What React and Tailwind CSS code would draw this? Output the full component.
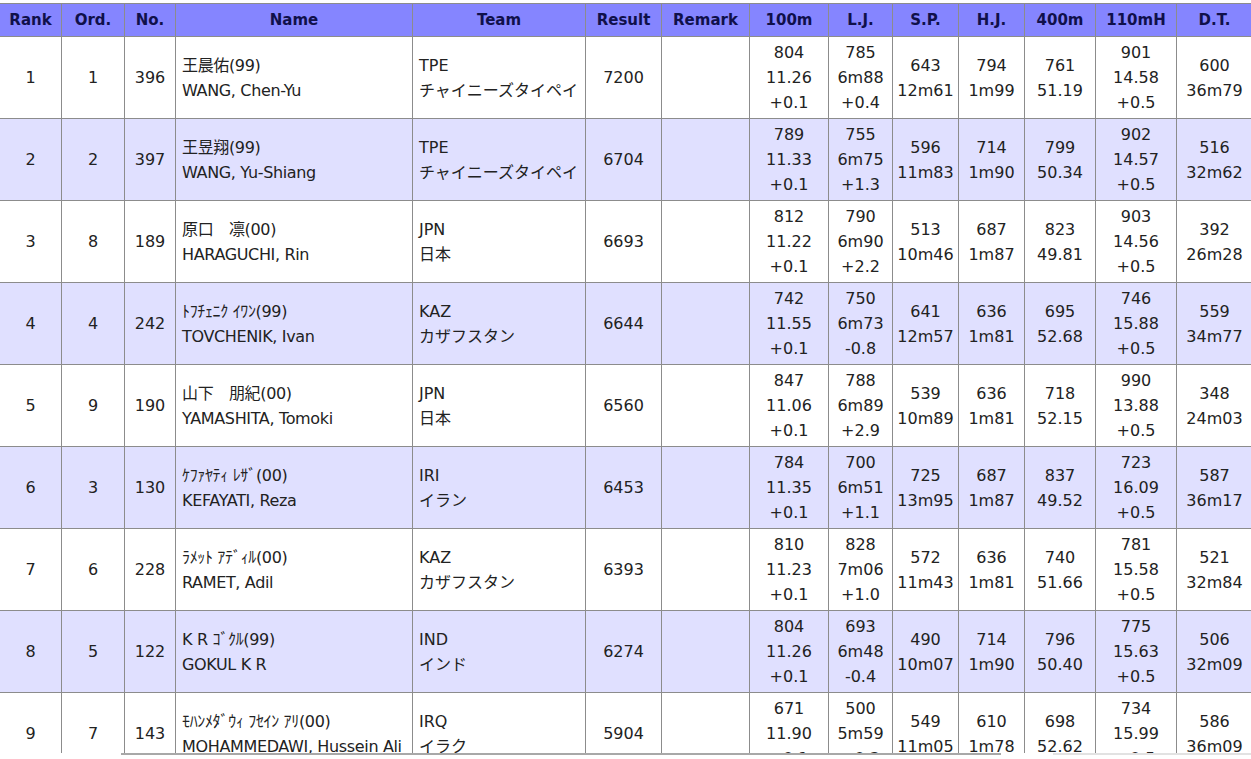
import React from 'react'

const cols = [
    { key: 'rank', label: 'Rank', w: 'w-[62px]' },
    { key: 'ord', label: 'Ord.', w: 'w-[63px]' },
    { key: 'no', label: 'No.', w: 'w-[51px]' },
    { key: 'name', label: 'Name', w: 'w-[237px]' },
    { key: 'team', label: 'Team', w: 'w-[173px]' },
    { key: 'result', label: 'Result', w: 'w-[76px]' },
    { key: 'remark', label: 'Remark', w: 'w-[88px]' },
    { key: 'e100', label: '100m', w: 'w-[79px]' },
    { key: 'lj', label: 'L.J.', w: 'w-[64px]' },
    { key: 'sp', label: 'S.P.', w: 'w-[66px]' },
    { key: 'hj', label: 'H.J.', w: 'w-[66px]' },
    { key: 'e400', label: '400m', w: 'w-[71px]' },
    { key: 'h110', label: '110mH', w: 'w-[81px]' },
    { key: 'dt', label: 'D.T.', w: 'w-[76px]' },
]

const rows = [
    { rank: 1, ord: 1, no: 396, jp: '王晨佑(99)', en: 'WANG, Chen-Yu', code: 'TPE', country: 'チャイニーズタイペイ', result: 7200,
      e100: ['804', '11.26', '+0.1'], lj: ['785', '6m88', '+0.4'], sp: ['643', '12m61'], hj: ['794', '1m99'], e400: ['761', '51.19'], h110: ['901', '14.58', '+0.5'], dt: ['600', '36m79'] },
    { rank: 2, ord: 2, no: 397, jp: '王昱翔(99)', en: 'WANG, Yu-Shiang', code: 'TPE', country: 'チャイニーズタイペイ', result: 6704,
      e100: ['789', '11.33', '+0.1'], lj: ['755', '6m75', '+1.3'], sp: ['596', '11m83'], hj: ['714', '1m90'], e400: ['799', '50.34'], h110: ['902', '14.57', '+0.5'], dt: ['516', '32m62'] },
    { rank: 3, ord: 8, no: 189, jp: '原口　凛(00)', en: 'HARAGUCHI, Rin', code: 'JPN', country: '日本', result: 6693,
      e100: ['812', '11.22', '+0.1'], lj: ['790', '6m90', '+2.2'], sp: ['513', '10m46'], hj: ['687', '1m87'], e400: ['823', '49.81'], h110: ['903', '14.56', '+0.5'], dt: ['392', '26m28'] },
    { rank: 4, ord: 4, no: 242, jp: 'ﾄﾌﾁｪﾆｸ ｲﾜﾝ(99)', en: 'TOVCHENIK, Ivan', code: 'KAZ', country: 'カザフスタン', result: 6644,
      e100: ['742', '11.55', '+0.1'], lj: ['750', '6m73', '-0.8'], sp: ['641', '12m57'], hj: ['636', '1m81'], e400: ['695', '52.68'], h110: ['746', '15.88', '+0.5'], dt: ['559', '34m77'] },
    { rank: 5, ord: 9, no: 190, jp: '山下　朋紀(00)', en: 'YAMASHITA, Tomoki', code: 'JPN', country: '日本', result: 6560,
      e100: ['847', '11.06', '+0.1'], lj: ['788', '6m89', '+2.9'], sp: ['539', '10m89'], hj: ['636', '1m81'], e400: ['718', '52.15'], h110: ['990', '13.88', '+0.5'], dt: ['348', '24m03'] },
    { rank: 6, ord: 3, no: 130, jp: 'ｹﾌｧﾔﾃｨ ﾚｻﾞ(00)', en: 'KEFAYATI, Reza', code: 'IRI', country: 'イラン', result: 6453,
      e100: ['784', '11.35', '+0.1'], lj: ['700', '6m51', '+1.1'], sp: ['725', '13m95'], hj: ['687', '1m87'], e400: ['837', '49.52'], h110: ['723', '16.09', '+0.5'], dt: ['587', '36m17'] },
    { rank: 7, ord: 6, no: 228, jp: 'ﾗﾒｯﾄ ｱﾃﾞｨﾙ(00)', en: 'RAMET, Adil', code: 'KAZ', country: 'カザフスタン', result: 6393,
      e100: ['810', '11.23', '+0.1'], lj: ['828', '7m06', '+1.0'], sp: ['572', '11m43'], hj: ['636', '1m81'], e400: ['740', '51.66'], h110: ['781', '15.58', '+0.5'], dt: ['521', '32m84'] },
    { rank: 8, ord: 5, no: 122, jp: 'K R ｺﾞｸﾙ(99)', en: 'GOKUL K R', code: 'IND', country: 'インド', result: 6274,
      e100: ['804', '11.26', '+0.1'], lj: ['693', '6m48', '-0.4'], sp: ['490', '10m07'], hj: ['714', '1m90'], e400: ['796', '50.40'], h110: ['775', '15.63', '+0.5'], dt: ['506', '32m09'] },
    { rank: 9, ord: 7, no: 143, jp: 'ﾓﾊﾝﾒﾀﾞｳｨ ﾌｾｲﾝ ｱﾘ(00)', en: 'MOHAMMEDAWI, Hussein Ali', code: 'IRQ', country: 'イラク', result: 5904,
      e100: ['671', '11.90', '+0.1'], lj: ['500', '5m59', '+0.3'], sp: ['549', '11m05'], hj: ['610', '1m78'], e400: ['698', '52.62'], h110: ['734', '15.99', '+0.5'], dt: ['586', '36m09'] },
]

const cell = 'border border-[#8c8c8c] align-middle p-0'

const Lines = ({ items }) => (
    <div className="flex flex-col leading-[25px]">
        {items.map((t, i) => <span key={i}>{t}</span>)}
    </div>
)

export default function App() {
    return (
        <div className="h-[759px] w-[1251px] overflow-hidden bg-white text-[16px] text-[#222]"
            style={{ fontFamily: '"DejaVu Sans", "Noto Sans CJK JP", sans-serif' }}>
            <div className="h-[753px] overflow-hidden pt-[3px]">
                <table className="ml-[-1px] table-fixed border-collapse w-[1253px]">
                    <thead>
                        <tr className="h-[33px] bg-[#8585ff]">
                            {cols.map(c => (
                                <th key={c.key} className={`${cell} ${c.w} text-[15px] font-bold text-[#10104a] text-center whitespace-nowrap`}>
                                    {c.label}
                                </th>
                            ))}
                        </tr>
                    </thead>
                    <tbody>
                        {rows.map((r, i) => (
                            <tr key={r.rank} className={`h-[82px] ${i % 2 ? 'bg-[#e0e0ff]' : 'bg-white'}`}>
                                <td className={`${cell} text-center`}>{r.rank}</td>
                                <td className={`${cell} text-center`}>{r.ord}</td>
                                <td className={`${cell} text-center`}>{r.no}</td>
                                <td className={`${cell} px-[6px] whitespace-nowrap overflow-hidden tracking-[-0.35px]`}>
                                    <Lines items={[r.jp, r.en]} />
                                </td>
                                <td className={`${cell} px-[6px] whitespace-nowrap overflow-hidden`}>
                                    <Lines items={[r.code, r.country]} />
                                </td>
                                <td className={`${cell} text-center`}>{r.result}</td>
                                <td className={cell}></td>
                                {['e100', 'lj', 'sp', 'hj', 'e400', 'h110', 'dt'].map(k => (
                                    <td key={k} className={`${cell} text-center whitespace-nowrap`}>
                                        <Lines items={r[k]} />
                                    </td>
                                ))}
                            </tr>
                        ))}
                    </tbody>
                </table>
            </div>
            <div className="flex h-[3px] items-start">
                <div className="ml-[121px] h-[2px] w-[880px] bg-[#a8a8a8]" />
                <div className="ml-[52px] h-[2px] flex-1 bg-[#e2e2e2]" />
            </div>
        </div>
    )
}
